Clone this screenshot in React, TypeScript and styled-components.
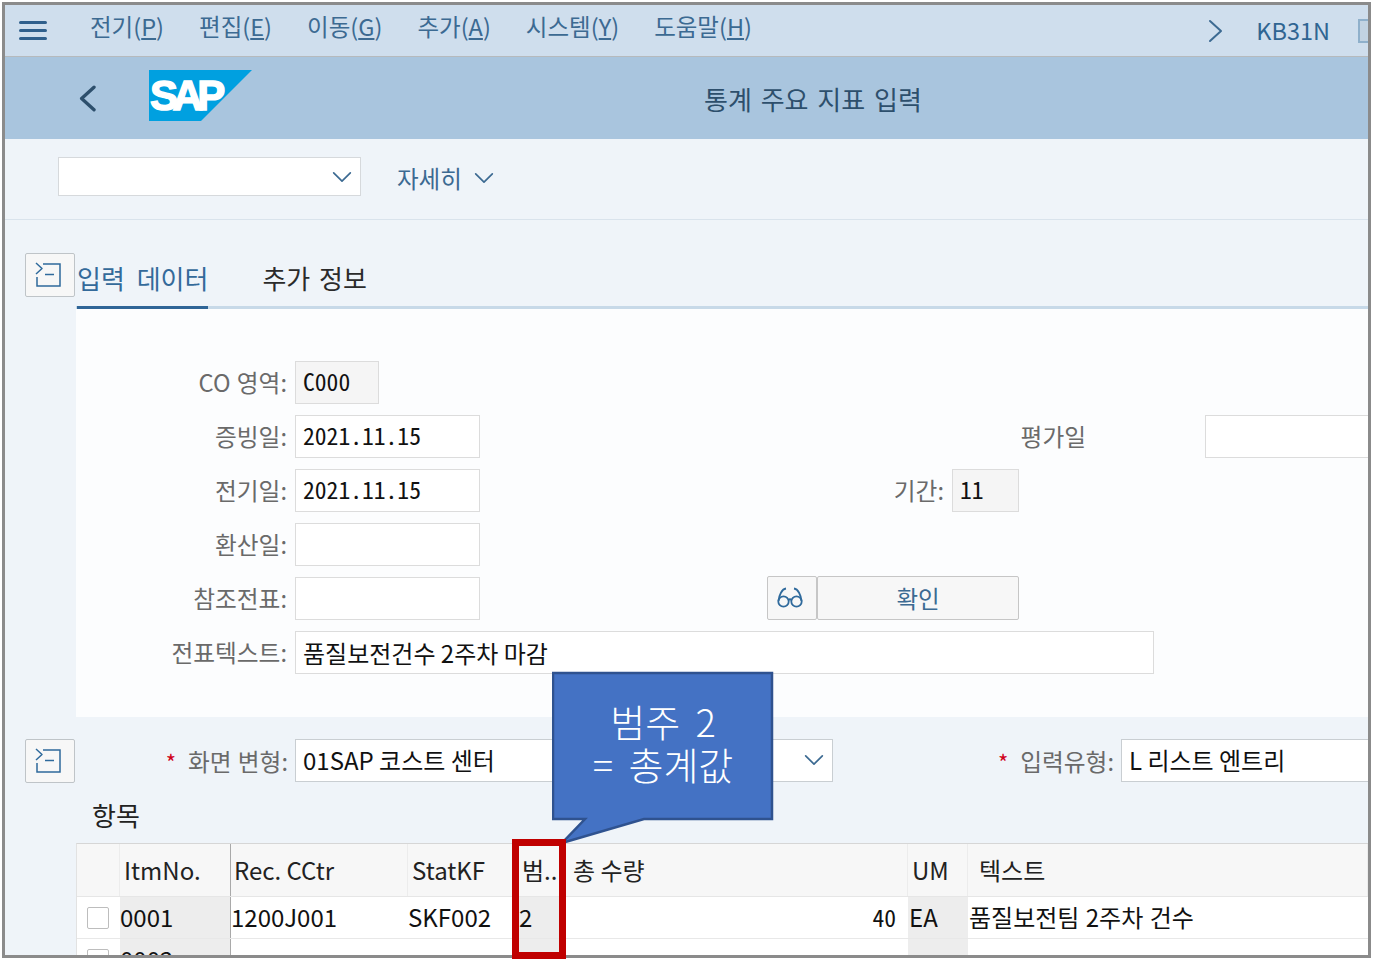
import React from "react";
import styled, { createGlobalStyle } from "styled-components";

const GlobalStyle = createGlobalStyle`
  html, body {
    margin: 0;
    padding: 0;
    background: #fff;
    font-family: "Noto Sans CJK KR", "Noto Sans", sans-serif;
  }
  * { box-sizing: border-box; }
`;

const monoStack = '"Noto Sans Mono CJK KR", "DejaVu Sans Mono", monospace';

const Stage = styled.div`
  position: relative;
  width: 1373px;
  height: 963px;
  overflow: hidden;
  padding: 2px 0 0 2px;
`;

const Frame = styled.div`
  width: 1369px;
  height: 956px;
  border: 3px solid #8b8b8b;
  overflow: hidden;
  background: #eff4f9;
`;

const MenuBar = styled.div`
  display: flex;
  align-items: center;
  height: 52px;
  padding-left: 14px;
  background: #cfdeed;
  border-bottom: 1px solid #b6babd;
`;

const MenuList = styled.div`
  display: flex;
  gap: 35px;
  margin-left: 43px;
  margin-top: -9px;
`;

const MenuItem = styled.span`
  font-size: 23.5px;
  color: #3c6a92;
  white-space: nowrap;
`;

const MenuRight = styled.div`
  display: flex;
  align-items: center;
  margin-left: auto;
  margin-right: -14px;
  flex-shrink: 0;
`;

const TCode = styled.span`
  margin-left: 28px;
  margin-top: -2px;
  font-size: 23.5px;
  color: #2f6592;
`;

const MiniBox = styled.span`
  display: block;
  width: 24px;
  height: 24px;
  margin-left: 28px;
  border: 2px solid #8fb0cb;
  background: #c2d3e2;
`;

const TitleBar = styled.div`
  display: flex;
  align-items: center;
  height: 82px;
  padding-left: 71px;
  background: #a9c5de;
`;

const LogoWrap = styled.div`
  margin-left: 46px;
  margin-top: -5px;
  height: 51px;
`;

const PageTitle = styled.h1`
  margin: 0 0 0 451px;
  font-size: 26px;
  font-weight: 400;
  word-spacing: 3px;
  color: #2d4f6c;
  white-space: nowrap;
`;

const Toolbar = styled.div`
  display: flex;
  align-items: center;
  height: 81px;
  padding: 0 0 5px 53px;
  border-bottom: 1px solid #d9e3ec;
`;

const Select = styled.div`
  display: flex;
  align-items: center;
  justify-content: flex-end;
  width: ${(p) => p.$width}px;
  height: ${(p) => p.$height}px;
  padding-right: 8px;
  background: #fff;
  border: 1px solid #d6d9dc;
  overflow: hidden;
  flex-shrink: 0;
`;

const MoreButton = styled.div`
  display: flex;
  align-items: center;
  gap: 12px;
  margin-left: 36px;
  margin-bottom: -3px;
  font-size: 23.5px;
  color: #3c6a92;
`;

const Split = styled.div`
  display: flex;
  align-items: flex-start;
`;

const ToggleButton = styled.div`
  display: flex;
  align-items: center;
  justify-content: center;
  width: 50px;
  height: 44px;
  margin: ${(p) => p.$top}px 1px 0 20px;
  padding: 0 4px 0 0;
  background: #f7f7f7;
  border: 1px solid #bfc4c8;
  border-radius: 2px;
  flex-shrink: 0;
`;

const MainColumn = styled.div`
  flex: 1;
  min-width: 0;
`;

const TabBar = styled.div`
  display: flex;
  align-items: flex-end;
  gap: 54px;
  height: 89px;
  border-bottom: 3px solid #c7d9e8;
`;

const Tab = styled.div`
  margin-bottom: -3px;
  padding: 0 0 ${(p) => (p.$active ? 10 : 12)}px;
  margin-left: ${(p) => (p.$active ? 1 : 0)}px;
  font-size: 26px;
  word-spacing: ${(p) => (p.$active ? 6 : 3)}px;
  line-height: 36px;
  color: ${(p) => (p.$active ? "#346a9a" : "#2b2b2b")};
  border-bottom: ${(p) => (p.$active ? "3px solid #2f6597" : "1px solid transparent")};
`;

const FormPanel = styled.div`
  display: flex;
  flex-direction: column;
  gap: 12px;
  padding: 52px 0 44px;
  background: #fcfdfe;
`;

const FormRow = styled.div`
  display: flex;
  align-items: center;
  height: 42px;
`;

const Label = styled.label`
  display: block;
  width: ${(p) => p.$width}px;
  padding-right: 8px;
  font-size: 23.7px;
  word-spacing: 1px;
  text-align: right;
  color: #6a6a6a;
  white-space: nowrap;
  flex-shrink: 0;
`;

const Field = styled.div`
  display: flex;
  align-items: center;
  width: ${(p) => p.$width}px;
  height: 43px;
  margin-left: ${(p) => p.$offset || 0}px;
  padding: 0 0 ${(p) => (p.$mono ? 2 : 0)}px 7px;
  background: ${(p) => (p.$readOnly ? "#f5f5f5" : "#fff")};
  border: 1px solid #dcdcdc;
  font-family: ${(p) => (p.$mono ? monoStack : "inherit")};
  font-size: ${(p) => (p.$mono ? "23.6px" : "24px")};
  color: #111;
  white-space: nowrap;
  flex-shrink: 0;
`;

const IconButton = styled.div`
  display: flex;
  align-items: center;
  justify-content: center;
  width: 50px;
  height: 44px;
  margin-left: 287px;
  padding-right: 4px;
  background: #f7f7f7;
  border: 1px solid #c6c6c6;
  border-radius: 2px;
`;

const TextButton = styled.div`
  display: flex;
  align-items: center;
  justify-content: center;
  width: 202px;
  height: 44px;
  background: #f7f7f7;
  border: 1px solid #c6c6c6;
  border-radius: 2px;
  font-size: 23.5px;
  color: #3c6a92;
`;

const VariantSection = styled.div`
  height: 126px;
`;

const VariantRow = styled.div`
  display: flex;
  align-items: flex-start;
`;

const RequiredLabel = styled.label`
  display: flex;
  align-items: center;
  justify-content: flex-end;
  width: ${(p) => p.$width}px;
  height: 43px;
  margin-top: 22px;
  padding-right: 7px;
  font-size: 23.7px;
  word-spacing: 1px;
  color: #6a6a6a;
  white-space: nowrap;
  flex-shrink: 0;
  &::before {
    content: "*";
    margin-right: 12px;
    color: #d0021b;
    font-size: 22px;
  }
`;

const VariantField = styled(Select)`
  justify-content: space-between;
  margin-top: 22px;
  padding-left: 7px;
  padding-bottom: 2px;
  border-color: #c9ced2;
  font-size: 24px;
  color: #111;
  white-space: nowrap;
`;

const ListTitle = styled.div`
  padding: 14px 0 0 87px;
  font-size: 26px;
  line-height: 36px;
  color: #222;
`;

const TableWrap = styled.div`
  margin-left: 71px;
  background: #fff;
  border-top: 1px solid #d6d6d6;
  border-left: 1px solid #e2e2e2;
`;

const columns = "43px 111px 177px 108px 49px 343px 60px 1fr";

const HeaderRow = styled.div`
  display: grid;
  grid-template-columns: ${columns};
  height: 53px;
  background: #f7f7f7;
  border-bottom: 1px solid #e6e6e6;
`;

const HeaderCell = styled.div`
  display: flex;
  align-items: center;
  padding: 0 0 2px ${(p) => p.$pad ?? 4}px;
  font-size: 24px;
  color: #222;
  white-space: nowrap;
  overflow: hidden;
  border-right: ${(p) => (p.$strong ? "1px solid #a9a9a9" : "1px solid #ececec")};
`;

const BodyRow = styled.div`
  display: grid;
  grid-template-columns: ${columns};
  height: 42px;
  border-bottom: 1px solid #e8e8e8;
`;

const BodyCell = styled.div`
  display: flex;
  align-items: center;
  justify-content: ${(p) => (p.$end ? "flex-end" : "flex-start")};
  padding: 0 ${(p) => (p.$end ? 12 : 0)}px 2px ${(p) => p.$pad ?? 0}px;
  background: ${(p) => (p.$shade ? "#ededed" : "transparent")};
  font-family: ${(p) => (p.$mono ? monoStack : "inherit")};
  font-size: ${(p) => (p.$mono ? "23.6px" : "24px")};
  word-spacing: 1px;
  color: #111;
  white-space: nowrap;
  overflow: hidden;
  border-right: ${(p) => (p.$strong ? "1px solid #a9a9a9" : "none")};
`;

const CheckBox = styled.span`
  display: block;
  width: 22px;
  height: 22px;
  margin: 2px 0 0 10px;
  background: #fff;
  border: 1px solid #bdbdbd;
  border-radius: 2px;
`;

const Callout = styled.div`
  position: absolute;
  left: 552px;
  top: 671px;
  width: 222px;
  height: 174px;
`;

const CalloutShape = styled.svg`
  position: absolute;
  inset: 0;
`;

const CalloutText = styled.div`
  position: relative;
  padding-top: 28px;
  width: 222px;
  font-size: 38px;
  font-weight: 300;
  word-spacing: 7px;
  line-height: 43px;
  text-align: center;
  color: #fff;
`;

const Highlight = styled.div`
  position: absolute;
  left: 512px;
  top: 839px;
  width: 54px;
  height: 120px;
  border: 7px solid #c00000;
`;

const Chevron = ({ dir, size, color = "#3c6a92", width = 2 }: { dir: "left" | "right" | "down"; size: number; color?: string; width?: number }) => {
  const d = dir === "left" ? "M16 2 L5 12 L16 22" : dir === "right" ? "M6 2 L17 12 L6 22" : "M2 7 L12 17 L22 7";
  return (
    <svg width={size} height={size} viewBox="0 0 24 24" fill="none">
      <path d={d} stroke={color} strokeWidth={width} strokeLinecap="round" strokeLinejoin="round" />
    </svg>
  );
};

const Hamburger = () => (
  <svg width="28" height="22" viewBox="0 0 28 22">
    <rect x="0" y="1" width="28" height="3" rx="1.5" fill="#2f5f8c" />
    <rect x="0" y="9" width="28" height="3" rx="1.5" fill="#2f5f8c" />
    <rect x="0" y="17" width="28" height="3" rx="1.5" fill="#2f5f8c" />
  </svg>
);

const SapLogo = () => (
  <svg width="104" height="51" viewBox="0 0 104 51">
    <polygon points="0,0 103,0 52,51 0,51" fill="#00a0e0" />
    <text
      x="1"
      y="40"
      fontFamily="Liberation Sans"
      fontWeight="700"
      fontSize="42"
      letterSpacing="-5.5"
      fill="#fff"
      stroke="#fff"
      strokeWidth="1.5"
    >
      SAP
    </text>
  </svg>
);

const PanelToggleIcon = () => (
  <svg width="26" height="26" viewBox="0 0 26 26" fill="none" stroke="#2f6a9c" strokeWidth="1.5">
    <path d="M1 1 L7 6.5 L1 12" strokeLinejoin="round" />
    <path d="M8 2 H25 V24 H2 V15" />
    <path d="M10 12.5 H19" />
  </svg>
);

const GlassesIcon = () => (
  <svg width="26" height="24" viewBox="0 0 26 24" fill="none" stroke="#2f6a9c" strokeWidth="1.8">
    <circle cx="6.5" cy="15.5" r="5.2" />
    <circle cx="19.5" cy="15.5" r="5.2" />
    <path d="M11.5 14 Q13 12.5 14.5 14" />
    <path d="M1.5 15 C2 9 5 3 9 2.5" />
    <path d="M24.5 15 C24 9 21 3 17 2.5" />
  </svg>
);

const menus: [string, string][] = [
  ["전기", "P"],
  ["편집", "E"],
  ["이동", "G"],
  ["추가", "A"],
  ["시스템", "Y"],
  ["도움말", "H"],
];

export default function App() {
  return (
    <>
      <GlobalStyle />
      <Stage>
        <Frame>
          <MenuBar>
            <Hamburger />
            <MenuList>
              {menus.map(([name, key]) => (
                <MenuItem key={key}>
                  {name}(<u>{key}</u>)
                </MenuItem>
              ))}
            </MenuList>
            <MenuRight>
              <Chevron dir="right" size={24} />
              <TCode>KB31N</TCode>
              <MiniBox />
            </MenuRight>
          </MenuBar>

          <TitleBar>
            <Chevron dir="left" size={27} color="#2d4f6c" width={3} />
            <LogoWrap>
              <SapLogo />
            </LogoWrap>
            <PageTitle>통계 주요 지표 입력</PageTitle>
          </TitleBar>

          <Toolbar>
            <Select $width={303} $height={39}>
              <Chevron dir="down" size={20} />
            </Select>
            <MoreButton>
              자세히
              <Chevron dir="down" size={20} />
            </MoreButton>
          </Toolbar>

          <Split>
            <ToggleButton $top={33}>
              <PanelToggleIcon />
            </ToggleButton>
            <MainColumn>
              <TabBar>
                <Tab $active>입력 데이터</Tab>
                <Tab>추가 정보</Tab>
              </TabBar>
              <FormPanel>
                <FormRow>
                  <Label $width={219}>CO 영역:</Label>
                  <Field $width={84} $readOnly $mono>C000</Field>
                </FormRow>
                <FormRow>
                  <Label $width={219}>증빙일:</Label>
                  <Field $width={185} $mono>2021.11.15</Field>
                  <Label $width={614}>평가일</Label>
                  <Field $width={180} $offset={111} />
                </FormRow>
                <FormRow>
                  <Label $width={219}>전기일:</Label>
                  <Field $width={185} $mono>2021.11.15</Field>
                  <Label $width={472}>기간:</Label>
                  <Field $width={67} $readOnly $mono>11</Field>
                </FormRow>
                <FormRow>
                  <Label $width={219}>환산일:</Label>
                  <Field $width={185} />
                </FormRow>
                <FormRow>
                  <Label $width={219}>참조전표:</Label>
                  <Field $width={185} />
                  <IconButton>
                    <GlassesIcon />
                  </IconButton>
                  <TextButton>확인</TextButton>
                </FormRow>
                <FormRow>
                  <Label $width={219}>전표텍스트:</Label>
                  <Field $width={859}>품질보전건수 2주차 마감</Field>
                </FormRow>
              </FormPanel>
            </MainColumn>
          </Split>

          <VariantSection>
            <VariantRow>
              <ToggleButton $top={22}>
                <PanelToggleIcon />
              </ToggleButton>
              <RequiredLabel $width={219}>화면 변형:</RequiredLabel>
              <VariantField $width={538} $height={43}>
                01SAP 코스트 센터
                <Chevron dir="down" size={20} />
              </VariantField>
              <RequiredLabel $width={288}>입력유형:</RequiredLabel>
              <VariantField $width={260} $height={43}>
                L 리스트 엔트리
              </VariantField>
            </VariantRow>
            <ListTitle>항목</ListTitle>
          </VariantSection>

          <TableWrap>
            <HeaderRow>
              <HeaderCell />
              <HeaderCell $strong>ItmNo.</HeaderCell>
              <HeaderCell $pad={3}>Rec. CCtr</HeaderCell>
              <HeaderCell>StatKF</HeaderCell>
              <HeaderCell $pad={6}>범..</HeaderCell>
              <HeaderCell $pad={8}>총 수량</HeaderCell>
              <HeaderCell>UM</HeaderCell>
              <HeaderCell $pad={11}>텍스트</HeaderCell>
            </HeaderRow>
            <BodyRow>
              <BodyCell $pad={0}><CheckBox /></BodyCell>
              <BodyCell $shade $strong>0001</BodyCell>
              <BodyCell>1200J001</BodyCell>
              <BodyCell>SKF002</BodyCell>
              <BodyCell $shade $pad={3}>2</BodyCell>
              <BodyCell $end $mono>40</BodyCell>
              <BodyCell $shade $pad={1}>EA</BodyCell>
              <BodyCell $pad={1}>품질보전팀 2주차 건수</BodyCell>
            </BodyRow>
            <BodyRow>
              <BodyCell $pad={0}><CheckBox /></BodyCell>
              <BodyCell $shade $strong>0002</BodyCell>
              <BodyCell />
              <BodyCell />
              <BodyCell $shade />
              <BodyCell />
              <BodyCell $shade />
              <BodyCell />
            </BodyRow>
          </TableWrap>
        </Frame>

        <Callout>
          <CalloutShape width="222" height="174" viewBox="0 0 222 174">
            <polygon
              points="1,2 220,2 220,148 92,148 10,172 33,148 1,148"
              fill="#4472c4"
              stroke="#2f528f"
              strokeWidth="2.5"
            />
          </CalloutShape>
          <CalloutText>
            범주 2
            <br />= 총계값
          </CalloutText>
        </Callout>
        <Highlight />
      </Stage>
    </>
  );
}
